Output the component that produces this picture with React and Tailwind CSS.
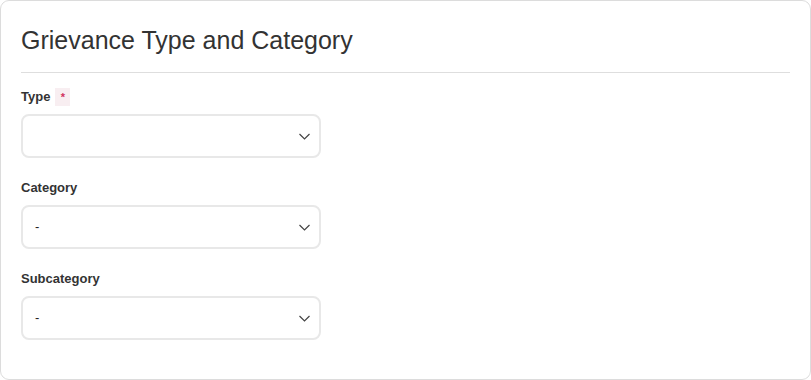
import React from "react";

function Chevron() {
  return (
    <svg width="11" height="7" viewBox="0 0 11 7" className="shrink-0">
      <path d="M0.5 1 L5.5 6 L10.5 1" fill="none" stroke="#444" strokeWidth="1.2" />
    </svg>
  );
}

function Select({ value }) {
  return (
    <div className="flex h-[44px] w-[300px] items-center justify-between rounded-[8px] border-2 border-[#e8e8e8] bg-white pl-[12px] pr-[9px] text-[13px] text-[#222]">
      <span>{value}</span>
      <Chevron />
    </div>
  );
}

function Field({ label, required, value, first }) {
  return (
    <div className={first ? "" : "mt-[21px]"}>
      <div className="flex h-[18px] items-center gap-[5px]">
        <span className="text-[13px] font-bold text-[#333]">{label}</span>
        {required && (
          <span className="flex h-[18px] w-[15px] items-center justify-center bg-[#f8eef1] text-[11px] font-bold leading-none text-[#d0335e]">
            *
          </span>
        )}
      </div>
      <div className="mt-[8px]">
        <Select value={value} />
      </div>
    </div>
  );
}

export default function App() {
  return (
    <div
      className="h-[380px] w-[811px] bg-white"
      style={{ fontFamily: '"Liberation Sans", Arial, sans-serif' }}
    >
      <div className="h-[380px] w-[811px] rounded-[9px] border border-[#dcdcdc] bg-white px-[20px]">
        <div className="pb-[17px] pt-[24px] text-[25px] leading-[30px] text-[#333]">
          Grievance Type and Category
        </div>
        <div className="h-px bg-[#dedede]" />
        <div className="pt-[15px]">
          <Field label="Type" required value="" first />
          <Field label="Category" value="-" />
          <Field label="Subcategory" value="-" />
        </div>
      </div>
    </div>
  );
}
